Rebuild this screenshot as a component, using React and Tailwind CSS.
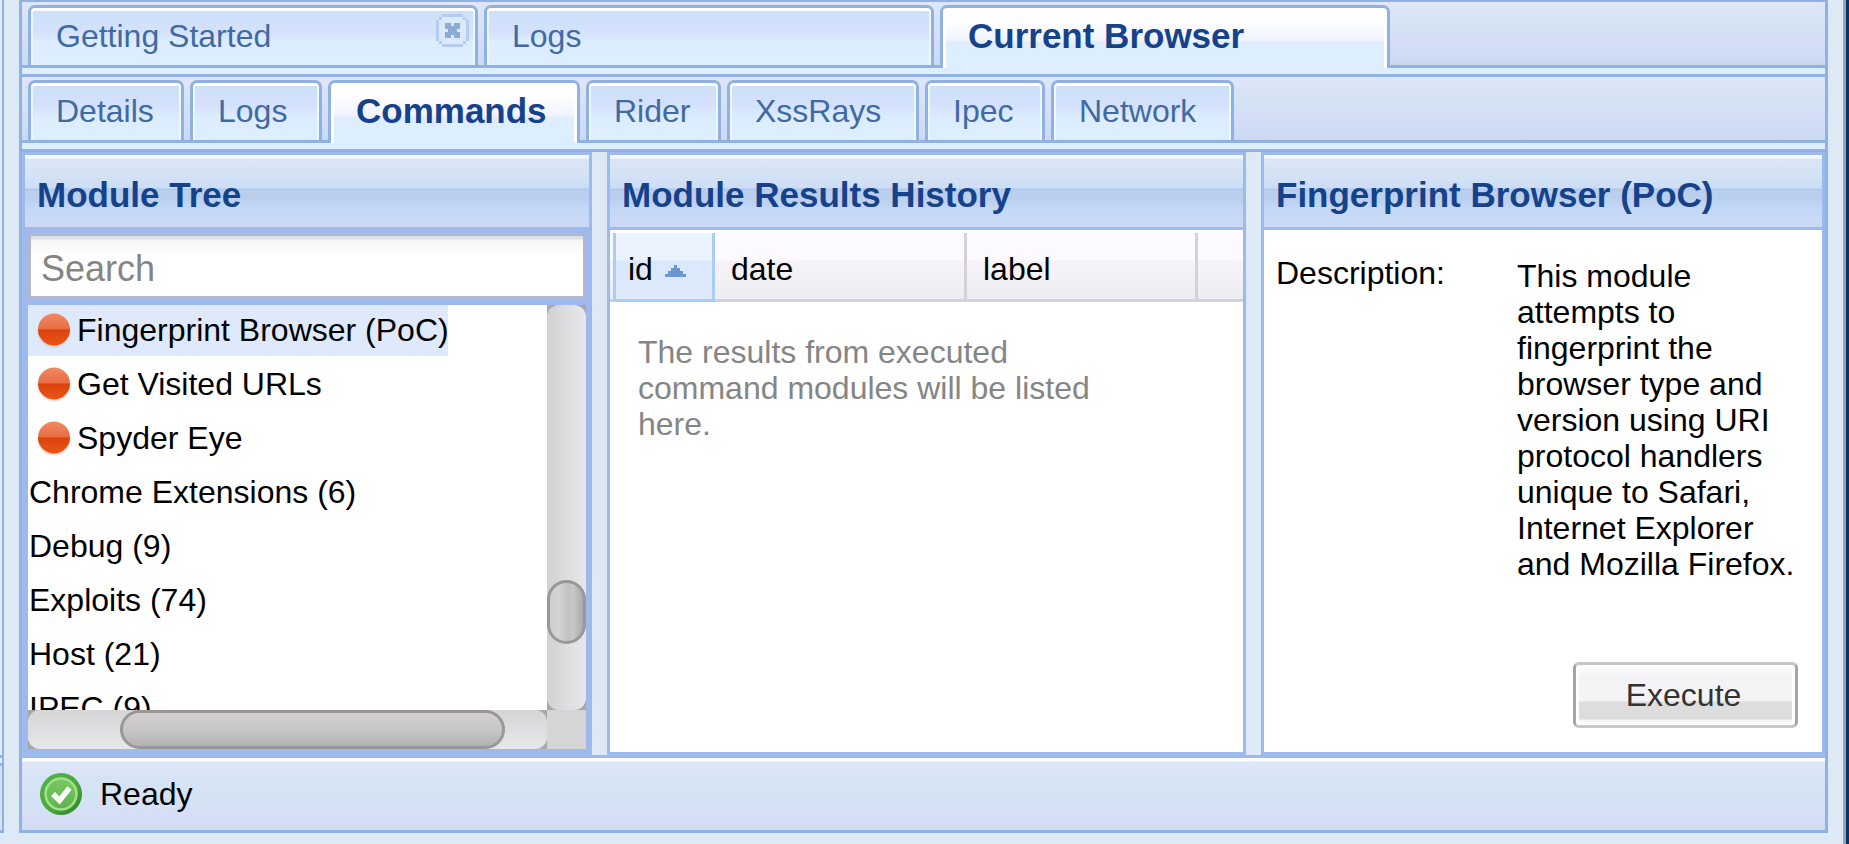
import React from "react";

const mainTabs = [
  { label: "Getting Started", closable: true },
  { label: "Logs" },
  { label: "Current Browser", active: true },
];

const subTabs = [
  { label: "Details", width: "w-[156px]" },
  { label: "Logs", width: "w-[132px]" },
  { label: "Commands", width: "w-[252px]", active: true },
  { label: "Rider", width: "w-[135px]" },
  { label: "XssRays", width: "w-[192px]" },
  { label: "Ipec", width: "w-[120px]" },
  { label: "Network", width: "w-[183px]" },
];

const modules = [
  { label: "Fingerprint Browser (PoC)", leaf: true, selected: true },
  { label: "Get Visited URLs", leaf: true },
  { label: "Spyder Eye", leaf: true },
  { label: "Chrome Extensions (6)" },
  { label: "Debug (9)" },
  { label: "Exploits (74)" },
  { label: "Host (21)" },
  { label: "IPEC (9)" },
];

function CloseIcon() {
  return (
    <svg viewBox="0 0 11 11" className="h-[33px] w-[33px]" shapeRendering="crispEdges" aria-hidden="true">
      <path d="M2 .5h7M2 10.5h7M.5 2v7M10.5 2v7M1 1.5h1M9 1.5h1M1 9.5h1M9 9.5h1" stroke="#b4ccf0" fill="none" />
      <path d="M2 1h7v1h1v7h-1v1H2V9H1V2h1z" fill="#dce9fd" />
      <path d="M3 3h2v1h1V3h2v2H7v1h1v2H6V7H5v1H3V6h1V5H3z" fill="#8eabd4" />
    </svg>
  );
}

function RedDot() {
  return (
    <svg viewBox="0 0 34 36" className="h-9 w-[34px] shrink-0" aria-hidden="true">
      <defs>
        <linearGradient id="dot" x1="0" y1="0" x2="0" y2="1">
          <stop offset="0" stopColor="#f08a64" />
          <stop offset=".48" stopColor="#e86c42" />
          <stop offset=".52" stopColor="#da430e" />
          <stop offset="1" stopColor="#ec5516" />
        </linearGradient>
      </defs>
      <circle cx="17" cy="19" r="16.500" fill="#c9b0a8" opacity=".4" />
      <circle cx="17" cy="17.500" r="16" fill="url(#dot)" />
    </svg>
  );
}

function CheckIcon() {
  return (
    <svg viewBox="0 0 42 42" className="size-[42px]" aria-hidden="true">
      <defs>
        <linearGradient id="ring" x1="0" y1="0" x2="1" y2="1">
          <stop offset="0" stopColor="#4fb944" />
          <stop offset=".6" stopColor="#48a53c" />
          <stop offset="1" stopColor="#2a7e24" />
        </linearGradient>
        <linearGradient id="disc" x1="0" y1="0" x2="0" y2="1">
          <stop offset="0" stopColor="#74ca60" />
          <stop offset="1" stopColor="#5fb34e" />
        </linearGradient>
      </defs>
      <circle cx="21" cy="21" r="21" fill="url(#ring)" />
      <circle cx="21" cy="21" r="15.500" fill="url(#disc)" stroke="#a5df8e" strokeWidth="2.500" />
      <path d="M13 21l6.500 6.500L29.500 15" fill="none" stroke="#fff" strokeWidth="5.500" />
    </svg>
  );
}

function Tab({ label, active, closable, width }) {
  return (
    <div
      className={
        "flex items-center rounded-t-[7px] border-x-[3px] border-t-[3px] border-[#8fb2e2] " +
        width +
        (active
          ? " relative -mb-[3px] h-[63px] bg-[linear-gradient(#ffffff_0,#ffffff_12px,#f0f3ff_33px,#dfeeff_34px,#dceeff_100%)] pb-[3px] shadow-[inset_3px_0_0_#fff,inset_-3px_0_0_#fff]"
          : " h-[60px] bg-[linear-gradient(#ccdff8_0,#d5e2fd_24px,#dcedff_34px,#dceeff_100%)] shadow-[inset_0_3px_0_#fff,inset_2px_0_0_#eef6ff,inset_-2px_0_0_#eef6ff]")
      }
    >
      <button
        type="button"
        role="tab"
        aria-selected={!!active}
        className={
          "h-full flex-1 pb-0.5 pl-[25px] text-left whitespace-nowrap " +
          (active ? "text-[35px] leading-9 font-bold text-[#15428b]" : "text-[32px] leading-9 text-[#416aa3]")
        }
      >
        {label}
      </button>
      {closable && (
        <button type="button" aria-label={"Close " + label} className="mr-1.5 mb-3">
          <CloseIcon />
        </button>
      )}
    </div>
  );
}

function TabStrip({ children, label }) {
  return (
    <div
      role="tablist"
      aria-label={label}
      className="flex gap-1.5 border-b-[3px] border-[#8fb2e2] bg-[linear-gradient(#dee6f8_0%,#d3e2f4_45%,#d7dcf7_62%,#cddcf6_84%,#cbd9ee_100%)] pt-[3px] pl-1.5"
    >
      {children}
    </div>
  );
}

function PanelHeader({ children }) {
  return (
    <h2 className="h-[75px] shrink-0 border-b-[3px] border-[#9db9ee] bg-[linear-gradient(#f4f8ff_0,#f4f8ff_3px,#dbe6f7_4px,#d3e2f5_22px,#cbddf7_33px,#aec6ea_34px,#bacfee_36px,#b9cfed_43px,#c4d8f7_54px,#cdd9f5_72px)] pt-1 pl-3 text-[35px] leading-[72px] font-bold whitespace-nowrap text-[#15428b]">
      {children}
    </h2>
  );
}

function ModuleTree() {
  return (
    <section className="flex min-h-0 min-w-0 flex-col border-[3px] border-[#9db9ee] bg-[#9db9ee]">
      <PanelHeader>Module Tree</PanelHeader>
      <div className="flex min-h-0 flex-1 flex-col gap-1.5 px-[3px] py-[3px]">
        <input
          type="text"
          placeholder="Search"
          aria-label="Search modules"
          className="h-[66px] w-full shrink-0 border-[3px] border-[#b1b9d2] bg-[linear-gradient(#dfe1e4_0,#dfe1e4_3px,#f4f4f5_4px,#ffffff_18px)] px-2.5 pt-1.5 text-[36px] text-black outline-none placeholder:text-[#858585] placeholder:opacity-100"
        />
        <div className="grid min-h-0 flex-1 grid-cols-[1fr_39px] grid-rows-[1fr_39px]">
          <div className="min-h-0 overflow-hidden bg-white">
            <ul className="-mt-[3px] text-[32px] leading-[54px] whitespace-nowrap">
              {modules.map((m) => (
                <li
                  key={m.label}
                  className={
                    "flex h-[54px] items-center pt-0.5 " +
                    (m.leaf ? "gap-1.5 pl-[9px] " : "pl-px ") +
                    (m.selected ? "w-[420px] bg-[#dfe9fc]" : "")
                  }
                >
                  {m.leaf && <RedDot />}
                  <span>{m.label}</span>
                </li>
              ))}
            </ul>
          </div>
          <div className="flex flex-col bg-[#a8a8a8]">
            <div className="flex flex-1 flex-col rounded-[12px] bg-[linear-gradient(90deg,#d2d1d2,#dedddf_50%,#e8e7e9)]">
              <div className="flex-[275]"></div>
              <div className="h-16 rounded-[20px] border-[3px] border-[#989898] bg-[linear-gradient(90deg,#d0cfd0,#d5d4d5_25%,#c2c1c2_55%,#c8c7c8_70%,#aaaaaa)]"></div>
              <div className="flex-[66]"></div>
            </div>
          </div>
          <div className="flex bg-[#a8a8a8]">
            <div className="flex flex-1 rounded-[12px] bg-[linear-gradient(#d6d5d6,#dedddf_50%,#e8e7e9)]">
              <div className="flex-[93]"></div>
              <div className="flex-[384] rounded-[20px] border-[3px] border-[#999798] bg-[linear-gradient(#d2d0d2,#c9c6c8_50%,#b3b1b2)]"></div>
              <div className="flex-[42]"></div>
            </div>
          </div>
          <div className="bg-[#d5d5d5]"></div>
        </div>
      </div>
    </section>
  );
}

function History() {
  const head =
    "border-b-[3px] border-[#d3d3d5] bg-[linear-gradient(#fdfaff_0,#fdfaff_27px,#f5f3f7_28px,#f3f2f7_42px,#ebecf1_66px)] p-0 pt-1.5 text-left font-normal";
  return (
    <section className="flex min-h-0 min-w-0 flex-col border-[3px] border-[#9db9ee] bg-white">
      <PanelHeader>Module Results History</PanelHeader>
      <table className="mt-[3px] w-full table-fixed border-separate border-spacing-0 text-[32px] leading-9">
        <thead>
          <tr className="h-[69px]">
            <th className={head + " w-[3px]"}></th>
            <th
              scope="col"
              aria-sort="ascending"
              className="w-[102px] border-x-[3px] border-b-[3px] border-[#aacdf3] bg-[linear-gradient(#ebf3fd_0,#eaf3ff_27px,#d9e8fb_28px,#dfebfc_100%)] p-0 pt-1.5 text-left font-normal"
            >
              <span className="flex items-center gap-3 pl-3">
                id
                <svg viewBox="0 0 21 12" className="mt-1 h-3 w-[21px]" shapeRendering="crispEdges" aria-hidden="true">
                  <path d="M9 0h3v3h3v3h3v3h3v3H0V9h3V6h3V3h3z" fill="#6a96d2" />
                </svg>
              </span>
            </th>
            <th scope="col" className={head + " w-[252px] border-r-[3px]"}>
              <span className="block pl-4">date</span>
            </th>
            <th scope="col" className={head + " w-[231px] border-r-[3px]"}>
              <span className="block pl-4">label</span>
            </th>
            <th className={head}></th>
          </tr>
        </thead>
      </table>
      <p className="w-[530px] pt-8 pl-7 text-[32px] leading-9 text-[#858585]">
        The results from executed command modules will be listed here.
      </p>
    </section>
  );
}

function Details() {
  return (
    <section className="flex min-h-0 min-w-0 flex-col border-[3px] border-[#9db9ee] bg-white">
      <PanelHeader>Fingerprint Browser (PoC)</PanelHeader>
      <div className="flex min-h-0 flex-1 flex-col justify-between pt-[25px] pr-6 pb-6 pl-3">
        <dl className="flex text-[32px] leading-9">
          <dt className="w-[241px] shrink-0">Description:</dt>
          <dd className="w-[287px] shrink-0 pt-[3px]">
            This module attempts to fingerprint the browser type and version using URI protocol handlers unique to
            Safari, Internet Explorer and Mozilla Firefox.
          </dd>
        </dl>
        <button
          type="button"
          className="h-[66px] w-[225px] self-end rounded-[6px] border-[3px] border-x-[#a6a6a6] border-y-[#c8c6c7] bg-[linear-gradient(#fdfcfd_0,#f6f3f7_12px,#f6f3f7_36px,#dddddd_37px,#dddddd_54px,#f6f5f7_55px)] pr-1 text-[32px] leading-9 text-[#333] shadow-[inset_0_0_0_3px_#fff]"
        >
          Execute
        </button>
      </div>
    </section>
  );
}

export default function App() {
  return (
    <div className="flex h-screen overflow-hidden bg-[#dde9f5] font-['Liberation_Sans',Arial,sans-serif] text-black">
      <div className="flex w-1 shrink-0 flex-col pb-[11px]">
        <div className="flex-1 border-r-2 border-b-[3px] border-[#8fb2e2] bg-[#e2f0fe]"></div>
        <div className="h-[5px] border-r-2 border-[#8fb2e2] bg-[#dceeff]"></div>
        <div className="h-[70px] border-y-[3px] border-r-2 border-[#8fb2e2] bg-[#d5e2f4]"></div>
      </div>
      <main className="flex min-w-0 flex-1 flex-col pr-[15px] pb-[11px] pl-[15px]">
        <div className="flex min-h-0 flex-1 flex-col border-x-[3px] border-t-2 border-b-[3px] border-[#8fb2e2]">
          <TabStrip label="Main">
            {mainTabs.map((t) => (
              <Tab key={t.label} width="w-[450px]" {...t} />
            ))}
          </TabStrip>
          <div className="h-[9px] shrink-0 border-b-[3px] border-[#8fb2e2] bg-[#dceeff]"></div>
          <TabStrip label="Browser">
            {subTabs.map((t) => (
              <Tab key={t.label} {...t} />
            ))}
          </TabStrip>
          <div className="h-[9px] shrink-0 border-b-[3px] border-[#8fb2e2] bg-[#dceeff]"></div>
          <div className="grid min-h-0 flex-1 grid-cols-[570fr_639fr_564fr] grid-rows-[minmax(0,1fr)] gap-x-[15px]">
            <ModuleTree />
            <History />
            <Details />
          </div>
          <footer
            role="status"
            className="flex h-[75px] shrink-0 items-center gap-[18px] border-t-[3px] border-[#9db9ee] bg-[linear-gradient(#fafcff_0,#fafcff_3px,#dee6f8_4px,#dae5f6_12px,#d5e4f4_20px,#d5e1f5_52px,#d6dcf6_60px,#d0def2_100%)] pl-[18px] text-[32px] leading-9"
          >
            <CheckIcon />
            <span>Ready</span>
          </footer>
        </div>
      </main>
      <div className="w-1.5 shrink-0 border-l-[3px] border-[#9aa3a8] bg-[#04346c]"></div>
    </div>
  );
}
